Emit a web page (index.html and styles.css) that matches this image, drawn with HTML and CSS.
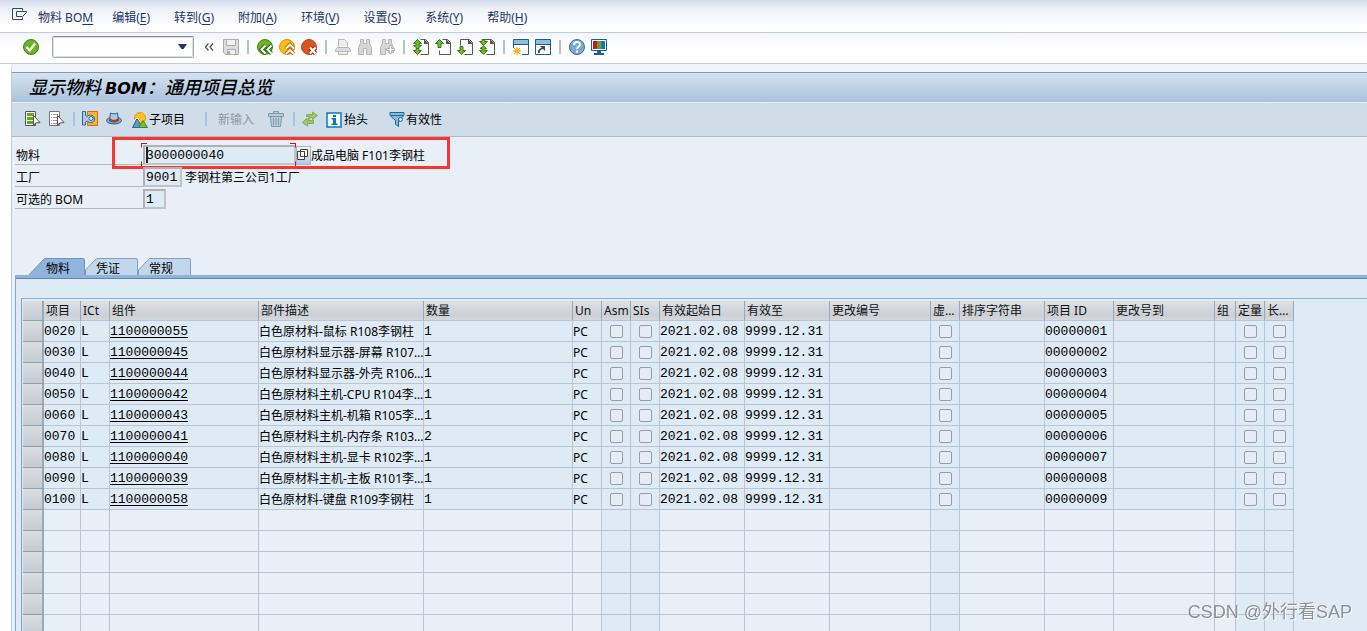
FILE: index.html
```html
<!DOCTYPE html>
<html lang="zh-CN">
<head>
<meta charset="utf-8">
<title>显示物料 BOM：通用项目总览</title>
<link rel="stylesheet" href="styles.css">
</head>
<body>
<div class="app">
<nav class="menubar">
  <button class="menu-icon" aria-label="菜单"><svg width="16" height="14" viewBox="0 0 16 14" fill="none" stroke="#2f4470"><path d="M10.500 9.500v2h-10v-11h10v2M4.500 3.500h10v1l-4 4h-6z"/></svg></button>
  <button class="menu-first">物料 BO<u>M</u></button>
  <button>编辑(<u>E</u>)</button>
  <button>转到(<u>G</u>)</button>
  <button>附加(<u>A</u>)</button>
  <button>环境(<u>V</u>)</button>
  <button>设置(<u>S</u>)</button>
  <button>系统(<u>Y</u>)</button>
  <button>帮助(<u>H</u>)</button>
</nav>

<div class="toolbar">
  <button class="ib" aria-label="确认"><svg viewBox="0 0 16 16"><circle cx="8" cy="8" r="7.500" fill="#6cb321" stroke="#4a7c31"/><path d="M3.500 8l3.200 3.500L12 4.500" fill="none" stroke="#fff" stroke-width="2.200"/></svg></button>
  <div class="combo"><input type="text" aria-label="命令"><svg width="10" height="6" viewBox="0 0 10 6"><path d="M0 0h9L5.500 5h-2z" fill="#1c3668"/></svg></div>
  <button class="ib" aria-label="折叠"><svg viewBox="0 0 16 16" fill="none" stroke="#555" stroke-width="1.300"><path d="M7.500 4.500L4.500 8l3 3.500M12 4.500L9 8l3 3.500"/></svg></button>
  <button class="ib" aria-label="保存"><svg viewBox="0 0 16 16" fill="#ddd" stroke="#adadad"><path d="M.500.500h15v15H2.500l-2-2z"/><path d="M3.500.500h9v6h-9zM4.500 10.500h8v5h-8z" fill="#f1f1f1"/><path d="M6 12v3" stroke-width="2"/></svg></button>
  <i class="sep"></i>
  <button class="ib" aria-label="返回"><svg viewBox="0 0 16 16"><circle cx="8" cy="8" r="7.500" fill="#6cb321" stroke="#4a8228"/><path d="M8.500 6.500l-4 4 4 4M14.500 6.500l-4 4 4 4" fill="none" stroke="#2c741f" stroke-width="4"/><path d="M8.500 6.500l-4 4 4 4M14.500 6.500l-4 4 4 4" fill="none" stroke="#fff" stroke-width="1.800"/></svg></button>
  <button class="ib" aria-label="退出"><svg viewBox="0 0 16 16"><circle cx="8" cy="8" r="7.500" fill="#fdbd12" stroke="#de8b18"/><path d="M7 9.500l4-4 4 4M7 15l4-4 4 4" fill="none" stroke="#d4690d" stroke-width="4"/><path d="M7 9.500l4-4 4 4M7 15l4-4 4 4" fill="none" stroke="#fff" stroke-width="1.800"/></svg></button>
  <button class="ib" aria-label="取消"><svg viewBox="0 0 16 16"><circle cx="8" cy="8" r="7.500" fill="#d9541e" stroke="#b74c20"/><path d="M9 8.500l5.500 6M14.500 8.500l-5.500 6" stroke="#a62a0b" stroke-width="4.500"/><path d="M9 8.500l5.500 6M14.500 8.500l-5.500 6" stroke="#fff" stroke-width="2.200"/></svg></button>
  <i class="sep"></i>
  <button class="ib" aria-label="打印"><svg viewBox="0 0 16 16" fill="#eee" stroke="#b5b5b5"><path d="M3.500 7.500v-7h6l3 3v4"/><path d="M2.500 8.500h11l2 2v2H.500v-2z" fill="#ddd"/><path d="M3.500 12.500h9v3h-9z"/></svg></button>
  <button class="ib" aria-label="查找"><svg viewBox="0 0 16 16" fill="#d7d7d7" stroke="#b5b5b5"><path d="M3.500.500h3v4h3v-4h3v4l2 4v7h-5v-6h-3v6h-5v-7l2-4z"/></svg></button>
  <button class="ib" aria-label="查找下一个"><svg viewBox="0 0 16 16" fill="#d7d7d7" stroke="#b5b5b5"><path d="M3.500.500h3v4h3v-4h3v4l2 4v5h-5v-4h-3v6h-5v-7l2-4z"/><path d="M10.500 6.500h2v3h3v2h-3v3h-2v-3h-3v-2h3z" fill="#fff"/></svg></button>
  <i class="sep"></i>
  <button class="ib" aria-label="第一页"><svg viewBox="0 0 16 16"><path d="M7.500.500h5l3 3v12h-8" fill="#fff" stroke="#555"/><path d="M11 0l5 5h-5z" fill="#555"/><path d="M4.500.500l4 4h-2.500v2h2.500l-4 3-4-3H3v-2H.500zM3 9.500h3v2h2.500l-4 4-4-4H3z" fill="#76b82a" stroke="#347a22"/></svg></button>
  <button class="ib" aria-label="上一页"><svg viewBox="0 0 16 16"><path d="M7.500.500h5l3 3v12h-11v-4" fill="#fff" stroke="#555"/><path d="M11 0l5 5h-5z" fill="#555"/><path d="M4.500.500l4 4H6v4H3v-4H.500z" fill="#76b82a" stroke="#347a22"/></svg></button>
  <button class="ib" aria-label="下一页"><svg viewBox="0 0 16 16"><path d="M3.500 6.500v-6h9l3 3v12h-8" fill="#fff" stroke="#555"/><path d="M11 0l5 5h-5z" fill="#555"/><path d="M3 7.500h3v4h2.500l-4 4-4-4H3z" fill="#76b82a" stroke="#347a22"/></svg></button>
  <button class="ib" aria-label="最后一页"><svg viewBox="0 0 16 16"><path d="M5.500.500h7l3 3v12h-8" fill="#fff" stroke="#555"/><path d="M11 0l5 5h-5z" fill="#555"/><path d="M3 .500h3v2h2.500l-4 4-4-4H3zM4.500 7l3 2.500H6v2h2.500l-4 4-4-4H3v-2H1z" fill="#76b82a" stroke="#347a22"/></svg></button>
  <i class="sep"></i>
  <button class="ib" aria-label="新建会话"><svg viewBox="0 0 16 16"><path d="M.500.500h15v15H9M.500 9V.500" fill="#fff" stroke="#15609a"/><path d="M1 1h14v4H1z" fill="#91bddf"/><path d="M1 5.500h14" stroke="#15609a"/><path d="M4 8v8M0 12h8M1 9l6 6M7 9l-6 6" stroke="#f39b12"/><circle cx="4" cy="12" r="2.500" fill="#fbb515"/></svg></button>
  <button class="ib" aria-label="快捷方式"><svg viewBox="0 0 16 16"><path d="M.500.500h15v15H.500z" fill="#fff" stroke="#15609a"/><path d="M1 1h14v4H1z" fill="#91bddf"/><path d="M1 5.500h14" stroke="#15609a"/><path d="M4 14c-1-3 1-4 4-5" fill="none" stroke="#444" stroke-width="1.800"/><path d="M5 7h5v5z" fill="#444"/></svg></button>
  <i class="sep"></i>
  <button class="ib" aria-label="帮助"><svg viewBox="0 0 16 16"><circle cx="8" cy="8" r="7.500" fill="#7da9d1" stroke="#376f9e"/><path d="M5 6c0-4 6-4 6-.500C11 8 8 7.500 8 10M8 11.500v2" fill="none" stroke="#fff" stroke-width="2"/></svg></button>
  <button class="ib" aria-label="自定义布局"><svg viewBox="0 0 16 16"><path d="M6 12h4v3H6zM3 14h10v2H3z" fill="#15609a"/><path d="M.500.500h15v11H.500z" fill="#fff" stroke="#15609a"/><path d="M2 2h4v8H2z" fill="#d8131b"/><path d="M6 2h4v8H6z" fill="#5aab1e"/><path d="M10 2h4v8h-4z" fill="#1673c4"/></svg></button>
</div>

<main class="panel">
  <h1>显示物料 <span>BOM</span>：通用项目总览</h1>
  <div class="actions">
    <button class="ab" aria-label="全选"><svg viewBox="0 0 16 16"><path d="M.500.500h10v14H.500z" fill="#fff" stroke="#555"/><path d="M2 2h7v3H2zM2 6h7v3H2zM2 10h7v3H2z" fill="#63ad14"/><path d="M8.500 4.500v10l2-2.500 4.500-.500z" fill="#fff" stroke="#555"/></svg></button>
    <button class="ab" aria-label="取消全选"><svg viewBox="0 0 16 16"><path d="M.500.500h10v14H.500z" fill="#fff" stroke="#777"/><path d="M2 3.500h1M4 3.500h5M2 6.500h1M4 6.500h5M2 9.500h1M4 9.500h4M2 12.500h1M4 12.500h4" stroke="#999"/><path d="M8.500 4.500v10l2-2.500 4.500-.500z" fill="#fff" stroke="#555"/></svg></button>
    <i class="sep"></i>
    <button class="ab" aria-label="展开"><svg viewBox="0 0 16 16"><path d="M5.500.500h10v14h-10v-3h5v-7h-5z" fill="#fbb32c" stroke="#d66b17"/><path d="M.500.500h3v4l2 1c2-3 7-1 7 2.500s-5 5-7 2l-2 1v3h-3z" fill="#a9cce4" stroke="#236a9c"/><circle cx="9" cy="7.500" r="2" fill="#dfedf6" stroke="#236a9c"/></svg></button>
    <button class="ab" aria-label="抬头信息"><svg viewBox="0 0 16 16"><ellipse cx="8" cy="9.500" rx="7.500" ry="3.500" fill="#79aed4" stroke="#1e6497"/><path d="M3.500 9.500l1-7.500c2 1 5 1 7 0l1 7.500c-2 2-7 2-9 0z" fill="#a8cae2" stroke="#1e6497"/><path d="M3.500 8.500c3 2 6 2 9 0" fill="none" stroke="#c92e1d" stroke-width="2.200"/></svg></button>
    <button class="ab text sub"><svg viewBox="0 0 16 16"><circle cx="8" cy="6" r="5.500" fill="#ffc31e" stroke="#eb9212"/><path d="M.500 15.500L5 6.500l5 9z" fill="#5b9ac6" stroke="#2b6792"/><path d="M6.500 15.500l4.500-7 4.500 7z" fill="#7abd35" stroke="#3f8230"/><path d="M2 9l3-3 3 3" fill="none" stroke="#fff"/></svg>子项目</button>
    <i class="sep wide"></i>
    <button class="ab text" disabled>新输入</button>
    <button class="ab bin" aria-label="删除" disabled><svg viewBox="0 0 16 16" fill="#b9ccd7" stroke="#7b99aa"><path d="M5.500 2.500v-2h5v2M.500 5.500v-3h15v3zM2.500 5.500h11l-1 10h-9zM5.500 7v7M8 7v7M10.500 7v7"/></svg></button>
    <i class="sep"></i>
    <button class="ab" aria-label="替换"><svg viewBox="0 0 16 16" fill="#a5c36a" stroke="#86a955"><path d="M4.500 3.500h6v-2.500l5 3.500-5 4V6.500H9l-3 3h5.500v3H5.500V15l-5-3.500 4-4V9L8 5.500H4.500z"/></svg></button>
    <button class="ab text info"><svg viewBox="0 0 16 16"><path d="M1 1h14v14H1z" fill="#fff" stroke="#087bc0" stroke-width="1.500"/><path d="M7 3h3v2H7zM5.500 6H10v5.500h1.500V13h-6v-1.500H7v-4H5.500z" fill="#087bc0"/></svg>抬头</button>
    <button class="ab text filter"><svg viewBox="0 0 16 16"><path d="M1 .500h14v3l-5.500 5v6l-3-2v-4L1 3.500z" fill="#8db9d5" stroke="#176799"/><path d="M2 3.500h12" stroke="#176799"/><circle cx="11.500" cy="7.500" r="2" fill="#d9e9f2" stroke="#176799"/></svg>有效性</button>
  </div>

  <form class="head">
    <div class="row first">
      <label for="mat">物料</label>
      <span class="field"><input id="mat" class="w-mat" type="text" value="3000000040"><i class="caret"></i></span>
      <button type="button" class="f4" aria-label="搜索帮助"><svg width="11" height="11" viewBox="0 0 11 11" fill="#fff" stroke="#453f3a"><path d="M3.500.500h7v7h-7zM.500 2.500h7v8h-7z"/></svg></button>
      <span>成品电脑 F101李钢柱</span>
      <div class="mark"></div>
    </div>
    <div class="row"><label for="plant">工厂</label><input id="plant" class="w-plant" type="text" value="9001" readonly><span class="desc">李钢柱第三公司1工厂</span></div>
    <div class="row"><label for="alt">可选的 BOM</label><input id="alt" class="w-alt" type="text" value="1" readonly></div>
  </form>

  <div class="tabs" role="tablist">
    <button role="tab" class="tab on" aria-selected="true"><svg viewBox="0 0 58 19" preserveAspectRatio="none"><path d="M0 19L16 2q1-1.500 3-1.500h37q1.500 0 1.500 1.500v17" fill="#8fb4dd" stroke="#6f94bc"/></svg><span>物料</span></button>
    <button role="tab" class="tab" aria-selected="false"><svg viewBox="0 0 53 19" preserveAspectRatio="none"><path d="M.500 19v-7L10 2q1-1.500 3-1.500h38q1.500 0 1.500 1.500v17" fill="#c1d8ec" stroke="#829fbf"/></svg><span>凭证</span></button>
    <button role="tab" class="tab" aria-selected="false"><svg viewBox="0 0 53 19" preserveAspectRatio="none"><path d="M.500 19v-7L10 2q1-1.500 3-1.500h38q1.500 0 1.500 1.500v17" fill="#c1d8ec" stroke="#829fbf"/></svg><span>常规</span></button>
  </div>

  <section class="sheet">
    <div class="grid">
    <table>
      <colgroup><col class="c21"><col class="c37"><col class="c29"><col class="c149"><col class="c165"><col class="c149"><col class="c29"><col class="c29"><col class="c29"><col class="c85"><col class="c85"><col class="c101"><col class="c29"><col class="c85"><col class="c69"><col class="c101"><col class="c21"><col class="c29"><col class="c29"></colgroup>
      <thead><tr><th></th><th>项目</th><th>ICt</th><th>组件</th><th>部件描述</th><th>数量</th><th>Un</th><th>Asm</th><th>SIs</th><th>有效起始日</th><th>有效至</th><th>更改编号</th><th>虚…</th><th>排序字符串</th><th>项目 ID</th><th>更改号到</th><th>组</th><th>定量</th><th>长…</th></tr></thead>
      <tbody>
      <tr><th></th><td class="m">0020</td><td class="m">L</td><td class="m"><a href="#">1100000055</a></td><td>白色原材料-鼠标 R108李钢柱</td><td class="m">1</td><td>PC</td><td class="k"><input type="checkbox" aria-label="Asm"></td><td class="k"><input type="checkbox" aria-label="SIs"></td><td class="m">2021.02.08</td><td class="m">9999.12.31</td><td></td><td class="k"><input type="checkbox" aria-label="虚拟"></td><td></td><td class="m">00000001</td><td></td><td></td><td class="k"><input type="checkbox" aria-label="定量"></td><td class="k"><input type="checkbox" aria-label="长文本"></td></tr>
      <tr><th></th><td class="m">0030</td><td class="m">L</td><td class="m"><a href="#">1100000045</a></td><td>白色原材料显示器-屏幕 R107…</td><td class="m">1</td><td>PC</td><td class="k"><input type="checkbox" aria-label="Asm"></td><td class="k"><input type="checkbox" aria-label="SIs"></td><td class="m">2021.02.08</td><td class="m">9999.12.31</td><td></td><td class="k"><input type="checkbox" aria-label="虚拟"></td><td></td><td class="m">00000002</td><td></td><td></td><td class="k"><input type="checkbox" aria-label="定量"></td><td class="k"><input type="checkbox" aria-label="长文本"></td></tr>
      <tr><th></th><td class="m">0040</td><td class="m">L</td><td class="m"><a href="#">1100000044</a></td><td>白色原材料显示器-外壳 R106…</td><td class="m">1</td><td>PC</td><td class="k"><input type="checkbox" aria-label="Asm"></td><td class="k"><input type="checkbox" aria-label="SIs"></td><td class="m">2021.02.08</td><td class="m">9999.12.31</td><td></td><td class="k"><input type="checkbox" aria-label="虚拟"></td><td></td><td class="m">00000003</td><td></td><td></td><td class="k"><input type="checkbox" aria-label="定量"></td><td class="k"><input type="checkbox" aria-label="长文本"></td></tr>
      <tr><th></th><td class="m">0050</td><td class="m">L</td><td class="m"><a href="#">1100000042</a></td><td>白色原材料主机-CPU R104李…</td><td class="m">1</td><td>PC</td><td class="k"><input type="checkbox" aria-label="Asm"></td><td class="k"><input type="checkbox" aria-label="SIs"></td><td class="m">2021.02.08</td><td class="m">9999.12.31</td><td></td><td class="k"><input type="checkbox" aria-label="虚拟"></td><td></td><td class="m">00000004</td><td></td><td></td><td class="k"><input type="checkbox" aria-label="定量"></td><td class="k"><input type="checkbox" aria-label="长文本"></td></tr>
      <tr><th></th><td class="m">0060</td><td class="m">L</td><td class="m"><a href="#">1100000043</a></td><td>白色原材料主机-机箱 R105李…</td><td class="m">1</td><td>PC</td><td class="k"><input type="checkbox" aria-label="Asm"></td><td class="k"><input type="checkbox" aria-label="SIs"></td><td class="m">2021.02.08</td><td class="m">9999.12.31</td><td></td><td class="k"><input type="checkbox" aria-label="虚拟"></td><td></td><td class="m">00000005</td><td></td><td></td><td class="k"><input type="checkbox" aria-label="定量"></td><td class="k"><input type="checkbox" aria-label="长文本"></td></tr>
      <tr><th></th><td class="m">0070</td><td class="m">L</td><td class="m"><a href="#">1100000041</a></td><td>白色原材料主机-内存条 R103…</td><td class="m">2</td><td>PC</td><td class="k"><input type="checkbox" aria-label="Asm"></td><td class="k"><input type="checkbox" aria-label="SIs"></td><td class="m">2021.02.08</td><td class="m">9999.12.31</td><td></td><td class="k"><input type="checkbox" aria-label="虚拟"></td><td></td><td class="m">00000006</td><td></td><td></td><td class="k"><input type="checkbox" aria-label="定量"></td><td class="k"><input type="checkbox" aria-label="长文本"></td></tr>
      <tr><th></th><td class="m">0080</td><td class="m">L</td><td class="m"><a href="#">1100000040</a></td><td>白色原材料主机-显卡 R102李…</td><td class="m">1</td><td>PC</td><td class="k"><input type="checkbox" aria-label="Asm"></td><td class="k"><input type="checkbox" aria-label="SIs"></td><td class="m">2021.02.08</td><td class="m">9999.12.31</td><td></td><td class="k"><input type="checkbox" aria-label="虚拟"></td><td></td><td class="m">00000007</td><td></td><td></td><td class="k"><input type="checkbox" aria-label="定量"></td><td class="k"><input type="checkbox" aria-label="长文本"></td></tr>
      <tr><th></th><td class="m">0090</td><td class="m">L</td><td class="m"><a href="#">1100000039</a></td><td>白色原材料主机-主板 R101李…</td><td class="m">1</td><td>PC</td><td class="k"><input type="checkbox" aria-label="Asm"></td><td class="k"><input type="checkbox" aria-label="SIs"></td><td class="m">2021.02.08</td><td class="m">9999.12.31</td><td></td><td class="k"><input type="checkbox" aria-label="虚拟"></td><td></td><td class="m">00000008</td><td></td><td></td><td class="k"><input type="checkbox" aria-label="定量"></td><td class="k"><input type="checkbox" aria-label="长文本"></td></tr>
      <tr><th></th><td class="m">0100</td><td class="m">L</td><td class="m"><a href="#">1100000058</a></td><td>白色原材料-键盘 R109李钢柱</td><td class="m">1</td><td>PC</td><td class="k"><input type="checkbox" aria-label="Asm"></td><td class="k"><input type="checkbox" aria-label="SIs"></td><td class="m">2021.02.08</td><td class="m">9999.12.31</td><td></td><td class="k"><input type="checkbox" aria-label="虚拟"></td><td></td><td class="m">00000009</td><td></td><td></td><td class="k"><input type="checkbox" aria-label="定量"></td><td class="k"><input type="checkbox" aria-label="长文本"></td></tr>
      </tbody>
      <tbody class="empty">
      <tr><th></th><td></td><td></td><td></td><td></td><td></td><td></td><td class="k"></td><td class="k"></td><td></td><td></td><td></td><td class="k"></td><td></td><td></td><td></td><td></td><td class="k"></td><td class="k"></td></tr>
      <tr><th></th><td></td><td></td><td></td><td></td><td></td><td></td><td class="k"></td><td class="k"></td><td></td><td></td><td></td><td class="k"></td><td></td><td></td><td></td><td></td><td class="k"></td><td class="k"></td></tr>
      <tr><th></th><td></td><td></td><td></td><td></td><td></td><td></td><td class="k"></td><td class="k"></td><td></td><td></td><td></td><td class="k"></td><td></td><td></td><td></td><td></td><td class="k"></td><td class="k"></td></tr>
      <tr><th></th><td></td><td></td><td></td><td></td><td></td><td></td><td class="k"></td><td class="k"></td><td></td><td></td><td></td><td class="k"></td><td></td><td></td><td></td><td></td><td class="k"></td><td class="k"></td></tr>
      <tr><th></th><td></td><td></td><td></td><td></td><td></td><td></td><td class="k"></td><td class="k"></td><td></td><td></td><td></td><td class="k"></td><td></td><td></td><td></td><td></td><td class="k"></td><td class="k"></td></tr>
      <tr><th></th><td></td><td></td><td></td><td></td><td></td><td></td><td class="k"></td><td class="k"></td><td></td><td></td><td></td><td class="k"></td><td></td><td></td><td></td><td></td><td class="k"></td><td class="k"></td></tr>
      </tbody>
    </table>
    </div>
  </section>
</main>
</div>
<div class="watermark">CSDN @外行看SAP</div>
</body>
</html>
```
FILE: styles.css
```css
* { box-sizing: border-box; }
body { margin: 0; background: #fff; color: #000; font: 12px/16px "Noto Sans", "Noto Sans CJK SC", sans-serif; }
button { font: inherit; color: inherit; background: none; border: 0; padding: 0; white-space: nowrap; }
input { font: inherit; color: inherit; margin: 0; }
svg { display: block; flex: none; }
.app { height: 100vh; display: flex; flex-direction: column; overflow: hidden; }

.menubar { display: flex; align-items: center; gap: 24px; height: 33px; padding: 4px 12px 0; color: #1e3566; background: linear-gradient(#d0dbea, #eef2f8 9px, #fff 26px); border-bottom: 1px solid #c2cbdc; flex: none; }
.menu-icon { margin-right: -14px; padding-bottom: 6px; }
.menu-first { margin-right: -5px; }
u { text-underline-offset: 2px; }

.toolbar { display: flex; align-items: center; height: 31px; padding: 0 20px 2px; background: linear-gradient(#f2f6fb, #fff 14px); border-bottom: 1px solid #c2cbdc; flex: none; }
.ib { width: 22px; height: 22px; display: grid; place-items: center; flex: none; }
.ib svg { width: 16px; height: 16px; }
.combo { position: relative; width: 142px; height: 22px; margin: 0 4px 0 10px; }
.combo input { display: block; width: 100%; height: 100%; border: 1px solid #a4a8ae; border-top-color: #85898f; border-radius: 2px; outline: 1px solid #dcdfe3; outline-offset: -2px; background: #fff; padding: 0 20px 0 4px; }
.combo svg { position: absolute; right: 6px; top: 8px; }
.sep { flex: none; width: 2px; height: 14px; margin: 0 5px; background: #aac4de; }

.panel { flex: 1; min-height: 0; display: flex; flex-direction: column; margin-left: 11px; padding-left: 1px; border-top: 8px solid #f0f5fa; background: #e8eff6; border-left: 1px solid #b9cad9; overflow: hidden; }
h1 { margin: 0 0 0 -1px; height: 31px; padding: 0 0 0 17px; flex: none; background: linear-gradient(#d4e2ef, #a9c3dc); border-top: 1px solid #8197b2; border-bottom: 1px solid #e6eef5; font: italic 500 18px/26px "Noto Sans CJK SC", sans-serif; white-space: nowrap; }
h1 span { font: italic bold 16px/26px "DejaVu Sans", sans-serif; }
.actions { display: flex; align-items: center; height: 34px; flex: none; margin-left: -1px; padding: 0 0 1px 13px; background: #cfdde8; border-bottom: 1px solid #a9bccb; }
.actions .sep { margin: 0 7px 0 0; }
.actions .wide { margin: 0 11px 0 20px; }
.ab { min-width: 24px; height: 20px; display: flex; align-items: center; }
.ab svg { width: 16px; height: 16px; }
.ab.text { gap: 1px; padding-top: 1px; }
.ab:disabled { color: #8b98a3; }
.sub { margin-left: 2px; }
.bin { margin-left: 14px; min-width: 25px; }
.ab.info { gap: 2px; }
.filter { margin-left: 21px; }

.head { flex: none; height: 121px; padding: 7px 0 0 2px; }
.row { position: relative; display: flex; align-items: flex-start; height: 22px; }
.row label { width: 128px; height: 20px; padding: 3px 0 0 1px; border-bottom: 1px solid #b4b7ba; margin-top: 1px; line-height: 16px; }
.row > span:not(.field) { padding-top: 4px; line-height: 16px; }
.row input { display: block; height: 20px; padding: 0 1px; border: 2px solid #aeb2b5; border-right-color: #c1c4c6; border-bottom-color: #c1c4c6; outline: none; background: #deeaf4; font: 13px/16px "Liberation Mono", monospace; margin-top: 1px; }
.w-mat { width: 153px; }
.w-plant { width: 39px; }
.w-alt { width: 23px; }
.row .desc { margin-left: 3px; }
.field { position: relative; }
.caret { position: absolute; left: 3px; top: 3px; width: 2px; height: 16px; background: #222; }
.field::before, .field::after { content: ""; position: absolute; top: -1px; width: 5px; height: 22px; border: 1px solid #d01018; border-bottom: 0; clip-path: polygon(0 0, 100% 0, 100% 20%, 0 20%, 0 80%, 100% 80%, 100% 100%, 0 100%); }
.field::before { left: -2px; border-right: 0; }
.field::after { right: 0; border-left: 0; }
.f4 { width: 15px; height: 19px; margin-top: 2px; padding: 2px 0 0; display: grid; place-content: start; background: linear-gradient(#edf2f8, #b3c9e4); border: 1px solid #a7b8cb; }
.mark { position: absolute; left: 97px; top: -7px; width: 338px; height: 32px; border: 3px solid #f93530; }

.tabs { display: flex; flex: none; height: 17px; padding-left: 14px; }
.tab { position: relative; width: 53px; height: 19px; padding: 3px 0 0 11px; text-align: left; }
.tab.on { width: 58px; padding-left: 19px; }
.tab svg { position: absolute; inset: 0; width: 100%; height: 100%; }
.tab span { position: relative; }
.sheet { flex: 1; min-height: 0; margin-left: 2px; padding: 20px 0 0 5px; border-left: 1px solid #87a7c9; border-top: 3px solid #8eb2d9; background: #deeaf4; box-shadow: inset 0 1px #5f87b5; overflow: hidden; position: relative; }
.grid { border-left: 1px solid #7f9fc3; border-top: 1px solid #8fb0d3; padding: 2px 0 0 1px; }
table { table-layout: fixed; width: 1271px; border-collapse: separate; border-spacing: 0; }
td, th { height: 21px; padding: 0; border-right: 1px solid #b9c5d5; border-bottom: 1px solid #b9c5d5; font-weight: 400; text-align: left; white-space: nowrap; overflow: hidden; line-height: 16px; background: #deeaf4; }
td { padding-top: 1px; }
thead th { height: 20px; padding-left: 2px; background: linear-gradient(#dee1e4, #cbd0d6 75%, #d5d9dd); border-right-color: #9aa7b8; color: #111; }
tbody th, thead th:first-child { background: linear-gradient(#dadde1, #c5cbd3); border-right: 2px solid #9ca8b8; border-bottom-color: #929daa; }
.empty td { background: #e8eff6; }
.empty .k { background: #deeaf4; }
.m { font: 13px/16px "Liberation Mono", monospace; }
.m a { color: #000; text-underline-offset: 2px; }
.k { padding: 0; }
.k input { appearance: none; display: block; width: 13px; height: 13px; margin: 0 auto; border: 1px solid #999da2; border-radius: 2px; background: #e5ecf5; }
.c21 { width: 21px; } .c29 { width: 29px; } .c37 { width: 37px; } .c69 { width: 69px; }
.c85 { width: 85px; } .c101 { width: 101px; } .c149 { width: 149px; } .c165 { width: 165px; }

.watermark { position: fixed; right: 15px; bottom: 6px; font: 18px/26px "Liberation Sans", "Noto Sans CJK SC", sans-serif; color: #8b9197; text-shadow: 1px 1px #fff; }
```
